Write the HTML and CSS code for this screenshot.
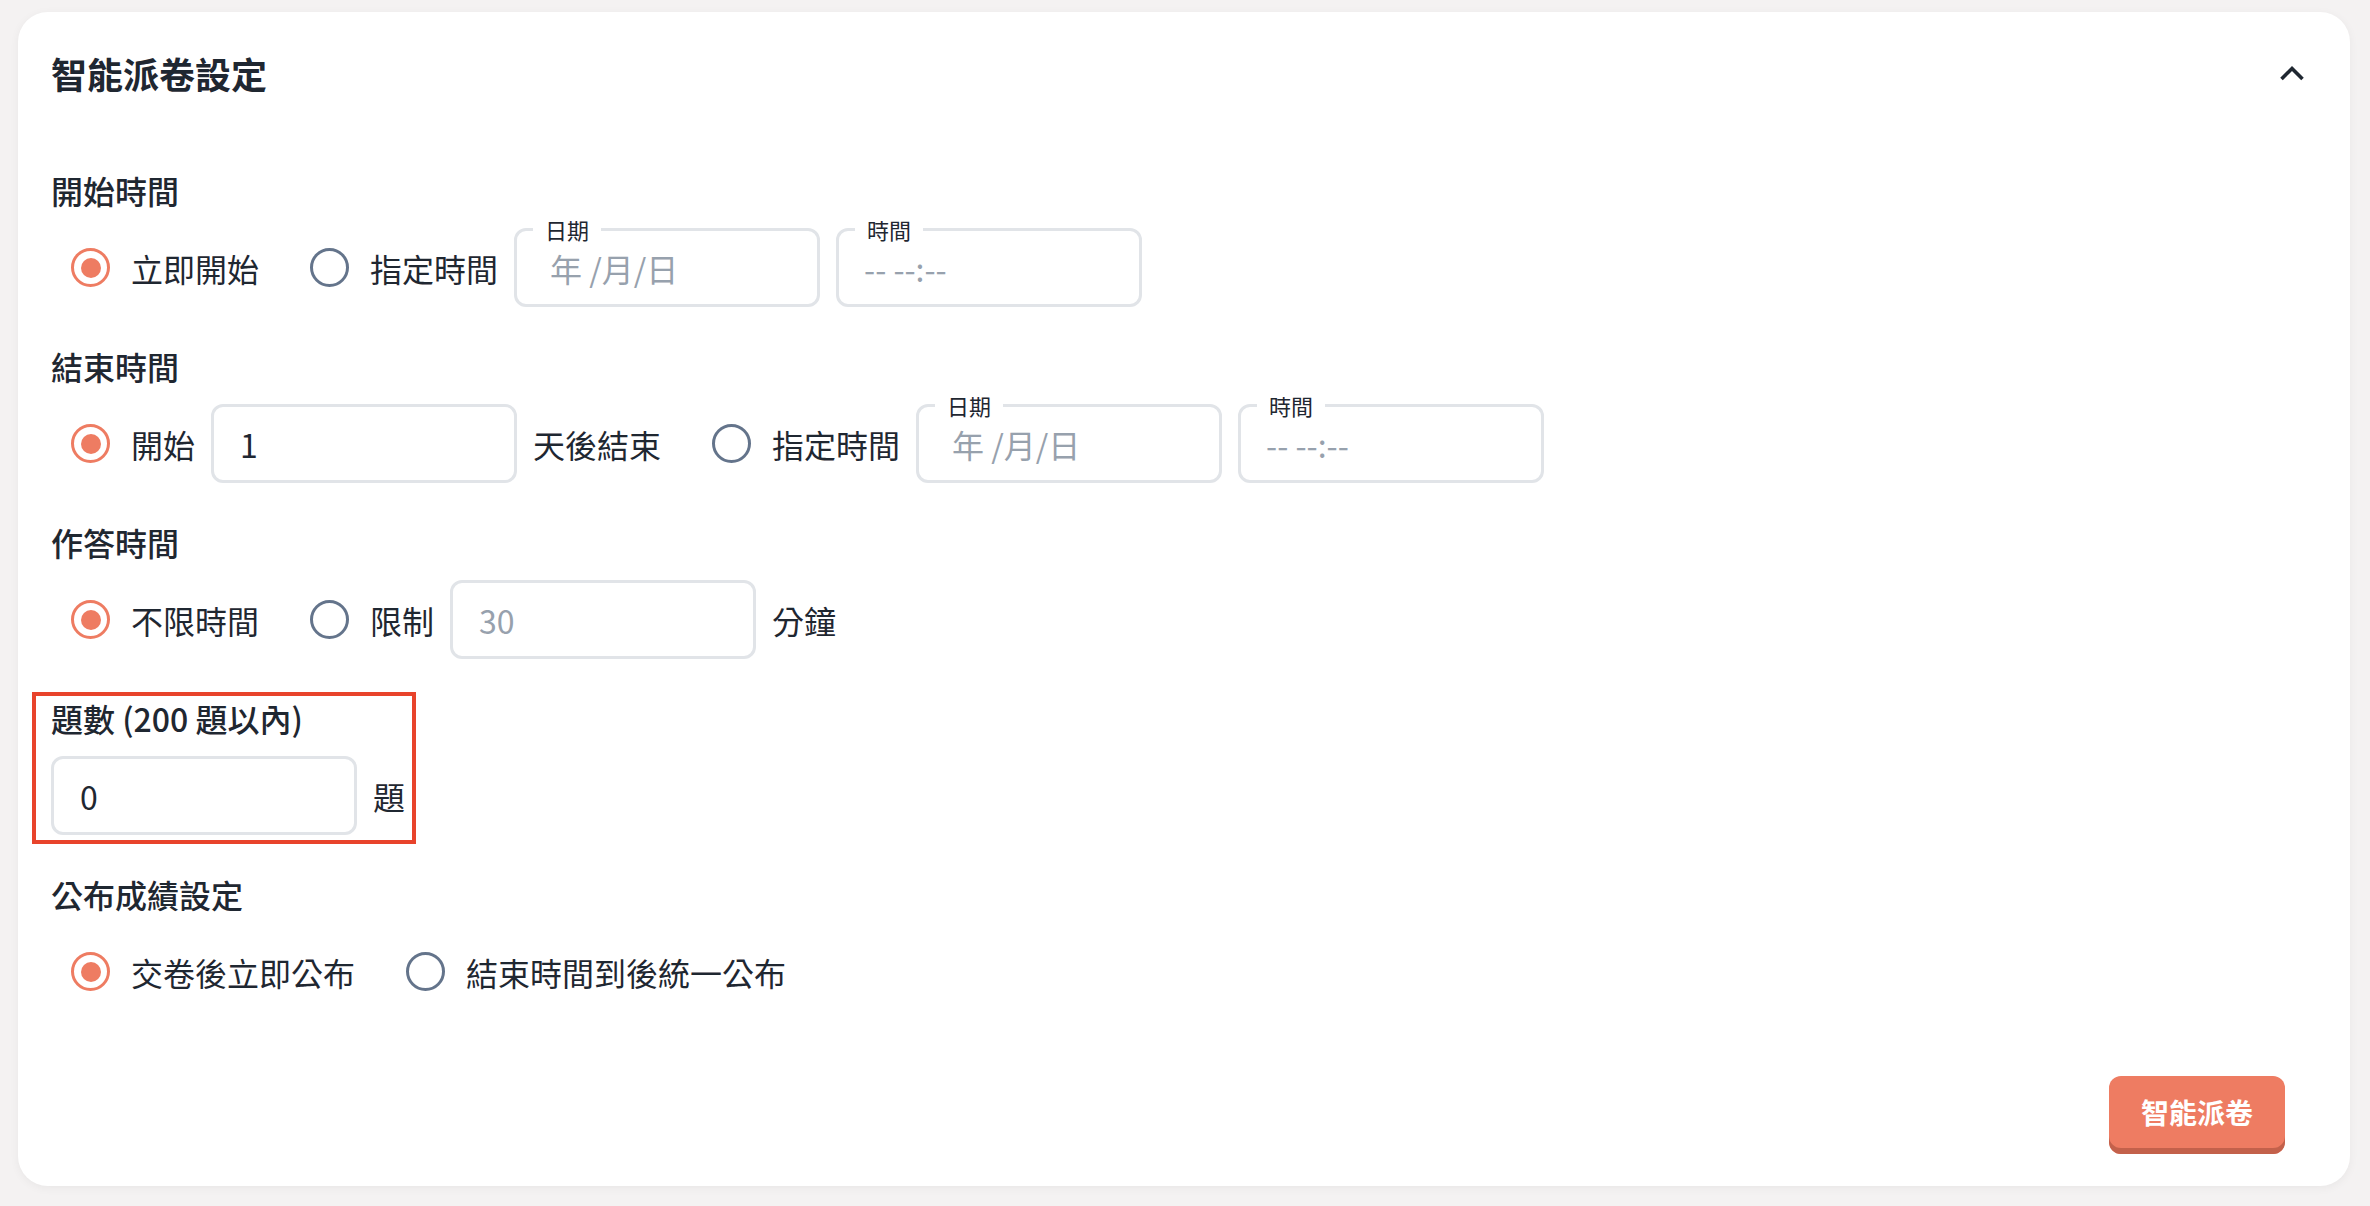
FILE: index.html
```html
<!DOCTYPE html>
<html lang="zh-Hant">
<head>
    <meta charset="UTF-8">
    <meta name="viewport" content="width=device-width, initial-scale=1.0">
    <title>智能派卷設定</title>
    <link rel="stylesheet" href="styles.css">
</head>
<body>
    <div class="card">
        <!-- Header -->
        <div class="card-header">
            <h2>智能派卷設定</h2>
            <button class="collapse-btn" aria-label="收合">
                <svg width="26" height="18" viewBox="0 0 26 18">
                    <polyline points="2.5,15 13,4.5 23.5,15" fill="none" stroke="#1f2731" stroke-width="3.6" stroke-linejoin="miter"/>
                </svg>
            </button>
        </div>

        <!-- 開始時間 -->
        <div class="section">
            <div class="section-label">開始時間</div>
            <div class="row choice-row">
                <label class="option"><span class="radio checked"></span>立即開始</label>
                <label class="option"><span class="radio"></span>指定時間</label>
                <div class="field date-field">
                    <span class="field-label">日期</span>
                    <input type="text" placeholder="年 /月/日">
                </div>
                <div class="field time-field">
                    <span class="field-label">時間</span>
                    <input type="text" placeholder="-- --:--">
                </div>
            </div>
        </div>

        <!-- 結束時間 -->
        <div class="section">
            <div class="section-label">結束時間</div>
            <div class="row choice-row">
                <label class="option"><span class="radio checked"></span>開始</label>
                <input class="text-input" type="text" value="1">
                <span class="suffix">天後結束</span>
                <label class="option"><span class="radio"></span>指定時間</label>
                <div class="field date-field">
                    <span class="field-label">日期</span>
                    <input type="text" placeholder="年 /月/日">
                </div>
                <div class="field time-field">
                    <span class="field-label">時間</span>
                    <input type="text" placeholder="-- --:--">
                </div>
            </div>
        </div>

        <!-- 作答時間 -->
        <div class="section">
            <div class="section-label">作答時間</div>
            <div class="row choice-row">
                <label class="option"><span class="radio checked"></span>不限時間</label>
                <label class="option"><span class="radio"></span>限制</label>
                <input class="text-input" type="text" placeholder="30">
                <span class="suffix">分鐘</span>
            </div>
        </div>

        <!-- 題數 -->
        <div class="section highlighted">
            <div class="section-label">題數 (200 題以內)</div>
            <div class="row">
                <input class="text-input" type="text" value="0">
                <span class="suffix">題</span>
            </div>
        </div>

        <!-- 公布成績設定 -->
        <div class="section">
            <div class="section-label">公布成績設定</div>
            <div class="row choice-row">
                <label class="option"><span class="radio checked"></span>交卷後立即公布</label>
                <label class="option"><span class="radio"></span>結束時間到後統一公布</label>
            </div>
        </div>

        <div class="card-footer">
            <button class="btn">智能派卷</button>
        </div>
    </div>
</body>
</html>
```

FILE: styles.css
```css
:root {
    --primary-color: #ee7c62;
    --primary-dark: #c3614b;
    --text-color: #1f2731;
    --muted-color: #97a1ad;
    --border-color: #e1e4e8;
    --radio-off: #64748b;
    --highlight-color: #e8432b;
}

body {
    font-family: "Noto Sans CJK TC", "Noto Sans", sans-serif;
    font-size: 32px;
    margin: 0;
    padding: 12px 20px 20px 18px;
    background-color: #f4f2f2;
    color: var(--text-color);
}

.card {
    background-color: white;
    border-radius: 30px;
    padding: 34px 45px 32px 33px;
    box-shadow: 0 2px 10px rgba(0, 0, 0, 0.05);
}

.card-header {
    display: flex;
    justify-content: space-between;
    align-items: center;
    height: 54px;
    margin-bottom: 66px;
}

.card-header h2 {
    margin: 0;
    font-size: 36px;
    font-weight: 700;
    line-height: 54px;
}

.collapse-btn {
    background: none;
    border: none;
    padding: 0;
    display: flex;
    cursor: pointer;
}

.section {
    margin-bottom: 35px;
}

.section-label {
    font-weight: 500;
    line-height: 48px;
    margin-bottom: 14px;
}

.row {
    display: flex;
    align-items: center;
    gap: 16px;
    height: 79px;
}

.choice-row {
    padding-left: 20px;
}

.option {
    display: flex;
    align-items: center;
    gap: 21px;
    white-space: nowrap;
    cursor: pointer;
}

.option:not(:first-child) {
    margin-left: 35px;
}

.radio {
    width: 39px;
    height: 39px;
    box-sizing: border-box;
    border: 3px solid var(--radio-off);
    border-radius: 50%;
    display: flex;
    align-items: center;
    justify-content: center;
}

.radio.checked {
    border-color: var(--primary-color);
}

.radio.checked::after {
    content: "";
    width: 20px;
    height: 20px;
    border-radius: 50%;
    background-color: var(--primary-color);
}

.suffix {
    white-space: nowrap;
}

.text-input,
.field input {
    font-family: inherit;
    font-size: 32px;
    color: var(--text-color);
    outline: none;
}

.text-input {
    width: 306px;
    height: 79px;
    box-sizing: border-box;
    border: 3px solid var(--border-color);
    border-radius: 12px;
    padding: 0 26px;
}

.text-input::placeholder,
.field input::placeholder {
    color: var(--muted-color);
}

.field {
    position: relative;
    width: 306px;
    height: 79px;
    box-sizing: border-box;
    border: 3px solid var(--border-color);
    border-radius: 12px;
    display: flex;
    align-items: center;
}

.field input {
    border: none;
    background: transparent;
    width: 100%;
    padding: 0 20px 0 25px;
}

.date-field input {
    padding-left: 33px;
}

.field-label {
    position: absolute;
    top: -16px;
    left: 16px;
    padding: 0 12px;
    background-color: white;
    font-size: 22px;
    line-height: 28px;
}

.highlighted {
    position: relative;
}

.highlighted::before {
    content: "";
    position: absolute;
    left: -19px;
    top: -2px;
    width: 384px;
    height: 152px;
    box-sizing: border-box;
    border: 4px solid var(--highlight-color);
    pointer-events: none;
}

.card-footer {
    display: flex;
    justify-content: flex-end;
    margin-top: 65px;
    padding-right: 20px;
}

.btn {
    font-family: inherit;
    background-color: var(--primary-color);
    color: white;
    border: none;
    height: 78px;
    padding: 0 32px 6px;
    border-radius: 12px;
    font-size: 28px;
    font-weight: 700;
    box-shadow: inset 0 -6px 0 var(--primary-dark);
    cursor: pointer;
}
```
